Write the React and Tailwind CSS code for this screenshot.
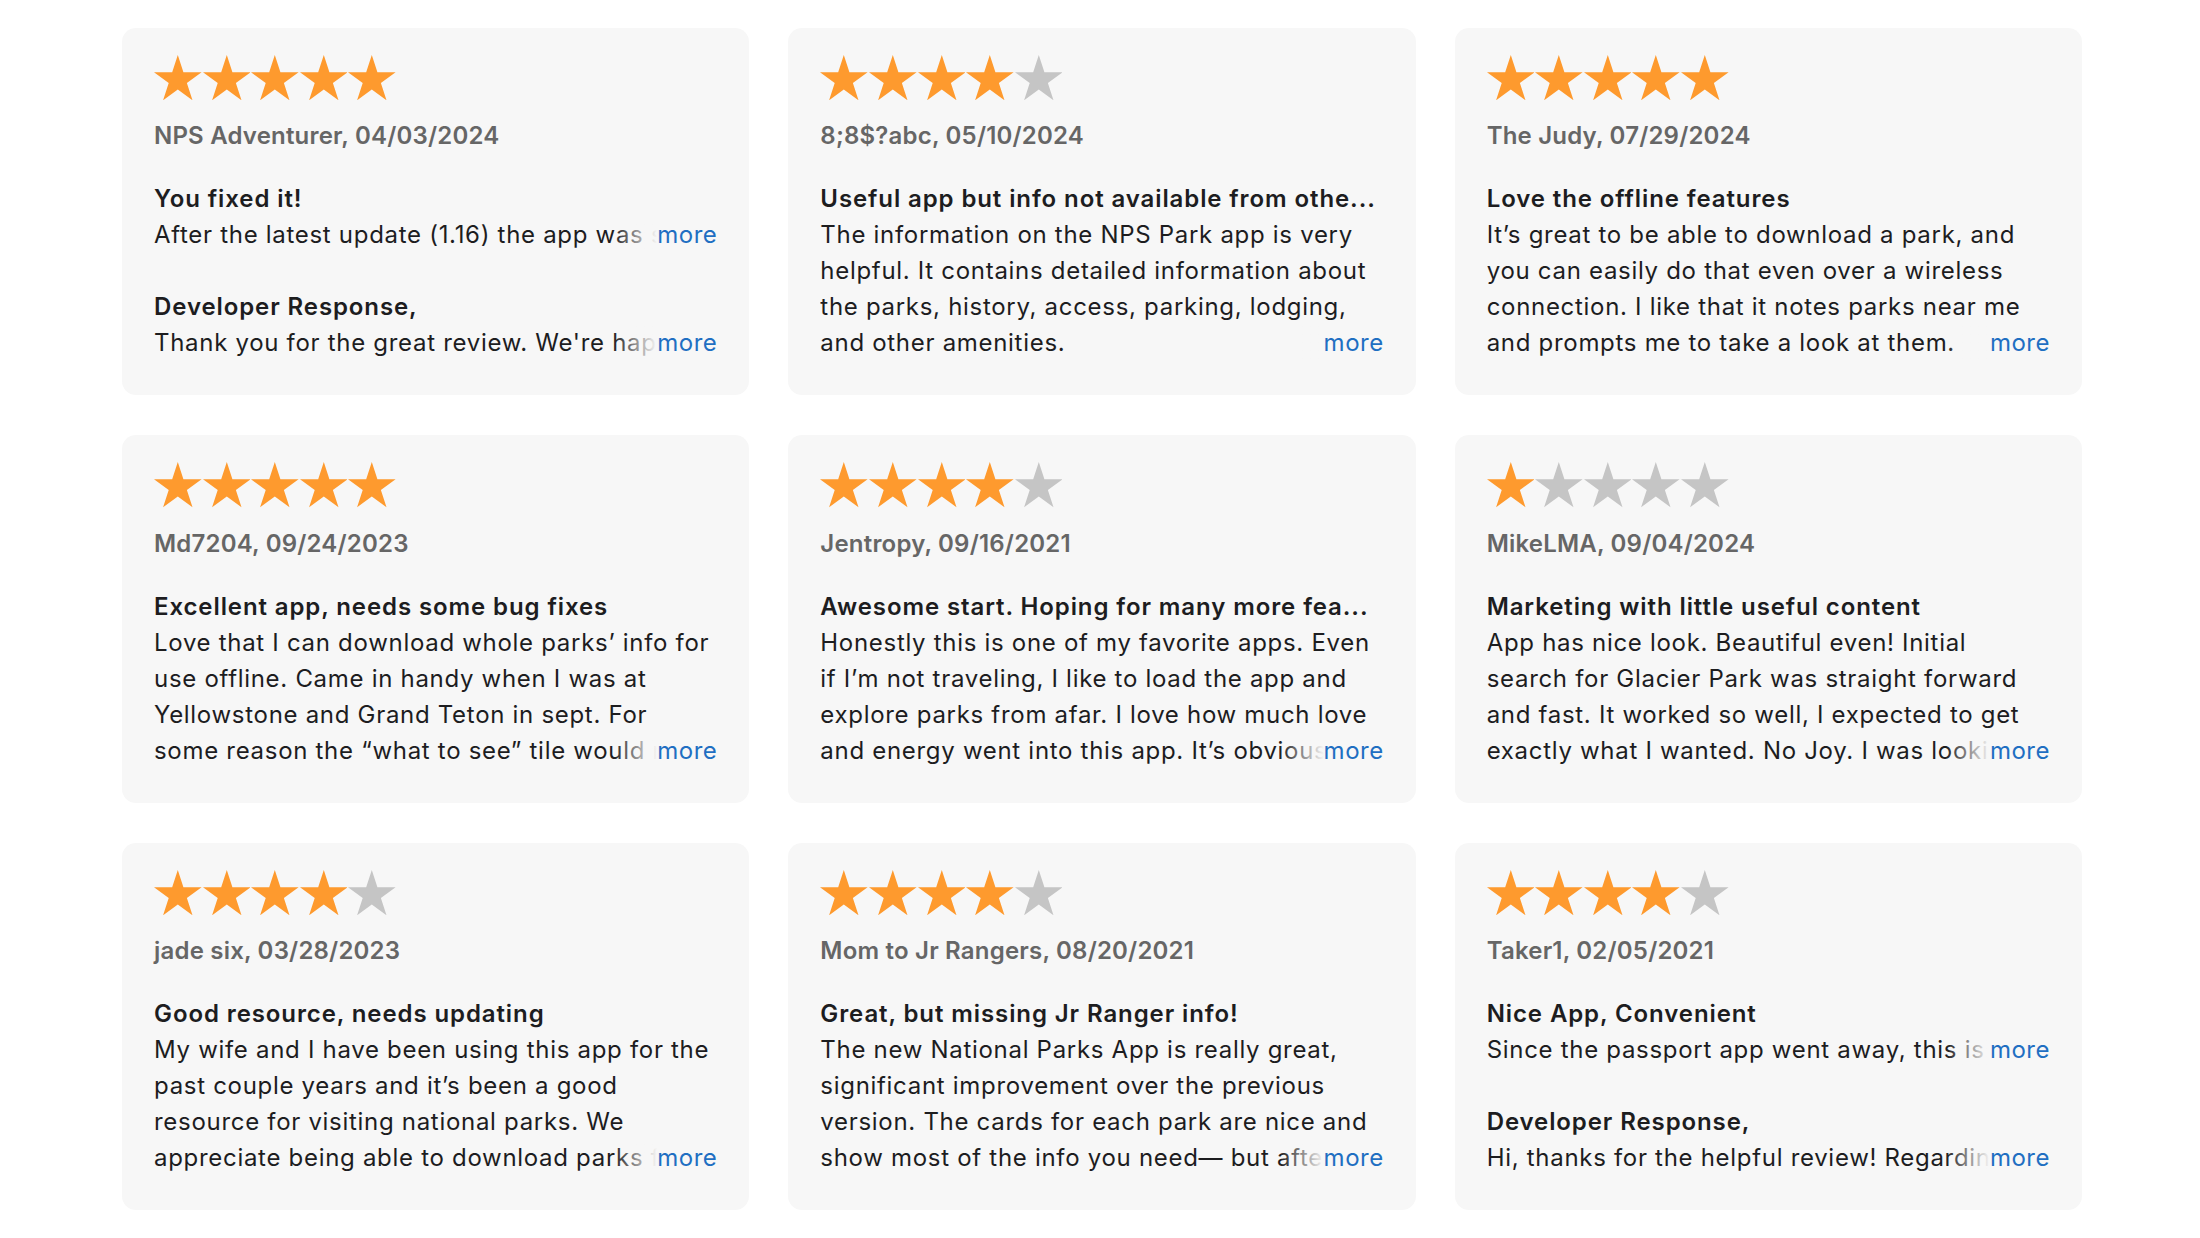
import React from "react";

const reviews = [
  {
    rating: 5,
    author: "NPS Adventurer, 04/03/2024",
    title: "You fixed it!",
    lines: ["After the latest update (1.16) the app was so much better to use"],
    dev: "Thank you for the great review. We're happy to hear that",
  },
  {
    rating: 4,
    author: "8;8$?abc, 05/10/2024",
    title: "Useful app but info not available from othe...",
    lines: [
      "The information on the NPS Park app is very",
      "helpful. It contains detailed information about",
      "the parks, history, access, parking, lodging,",
      "and other amenities.",
    ],
  },
  {
    rating: 5,
    author: "The Judy, 07/29/2024",
    title: "Love the offline features",
    lines: [
      "It’s great to be able to download a park, and",
      "you can easily do that even over a wireless",
      "connection. I like that it notes parks near me",
      "and prompts me to take a look at them.",
    ],
  },
  {
    rating: 5,
    author: "Md7204, 09/24/2023",
    title: "Excellent app, needs some bug fixes",
    lines: [
      "Love that I can download whole parks’ info for",
      "use offline. Came in handy when I was at",
      "Yellowstone and Grand Teton in sept. For",
      "some reason the “what to see” tile would not load",
    ],
  },
  {
    rating: 4,
    author: "Jentropy, 09/16/2021",
    title: "Awesome start. Hoping for many more fea...",
    lines: [
      "Honestly this is one of my favorite apps. Even",
      "if I’m not traveling, I like to load the app and",
      "explore parks from afar. I love how much love",
      "and energy went into this app. It’s obvious that",
    ],
  },
  {
    rating: 1,
    author: "MikeLMA, 09/04/2024",
    title: "Marketing with little useful content",
    lines: [
      "App has nice look. Beautiful even! Initial",
      "search for Glacier Park was straight forward",
      "and fast. It worked so well, I expected to get",
      "exactly what I wanted. No Joy. I was looking for",
    ],
  },
  {
    rating: 4,
    author: "jade six, 03/28/2023",
    title: "Good resource, needs updating",
    lines: [
      "My wife and I have been using this app for the",
      "past couple years and it’s been a good",
      "resource for visiting national parks. We",
      "appreciate being able to download parks for",
    ],
  },
  {
    rating: 4,
    author: "Mom to Jr Rangers, 08/20/2021",
    title: "Great, but missing Jr Ranger info!",
    lines: [
      "The new National Parks App is really great,",
      "significant improvement over the previous",
      "version. The cards for each park are nice and",
      "show most of the info you need— but after",
    ],
  },
  {
    rating: 4,
    author: "Taker1, 02/05/2021",
    title: "Nice App, Convenient",
    lines: ["Since the passport app went away, this is the next best thing"],
    dev: "Hi, thanks for the helpful review! Regarding the passport",
  },
];

function Star({ filled }) {
  return (
    <svg
      viewBox="0 0 47.6 45.3"
      className="w-[47.6px] h-[45.3px] shrink-0"
      fill={filled ? "#fe9a2e" : "#c5c5c5"}
    >
      <polygon points="23.8,0 29.42,17.3 47.6,17.3 32.89,27.99 38.51,45.3 23.8,34.6 9.09,45.3 14.71,27.99 0,17.3 18.18,17.3" />
    </svg>
  );
}

function Stars({ rating }) {
  return (
    <div className="flex gap-[1px]">
      {[0, 1, 2, 3, 4].map((i) => (
        <Star key={i} filled={i < rating} />
      ))}
    </div>
  );
}

function Lines({ lines }) {
  return (
    <div className="tracking-[0.7px] text-[#1d1d1f]">
      {lines.map((l, i) => {
        const last = i === lines.length - 1;
        return (
          <div
            key={i}
            className={
              last
                ? "relative whitespace-nowrap overflow-hidden h-[36px]"
                : "whitespace-nowrap overflow-hidden h-[36px]"
            }
          >
            {l}
            {last && (
              <div className="absolute right-0 top-0 flex h-full">
                <div className="w-[44px] h-full bg-gradient-to-r from-[#f7f7f700] to-[#f7f7f7]" />
                <span className="bg-[#f7f7f7] text-[#1f6fc2] tracking-[0.5px]">more</span>
              </div>
            )}
          </div>
        );
      })}
    </div>
  );
}

function Card({ r }) {
  return (
    <div className="bg-[#f7f7f7] rounded-[14px] px-8 pt-[27px] pb-[34px] min-w-0">
      <Stars rating={r.rating} />
      <div className="mt-[21px] leading-[30px] text-[24px] font-semibold text-[#666666] tracking-[0.2px]">
        {r.author}
      </div>
      <div className="mt-[30px] text-[24px] leading-[36px] text-[#1d1d1f]">
        <div className="font-semibold truncate tracking-[0.9px]">{r.title}</div>
        <Lines lines={r.lines} />
        {r.dev && (
          <div className="mt-[36px]">
            <div className="font-semibold tracking-[0.9px]">Developer Response,</div>
            <Lines lines={[r.dev]} />
          </div>
        )}
      </div>
    </div>
  );
}

export default function App() {
  return (
    <div
      className="min-h-[1238px] bg-white pl-[122px] pr-[118px] pt-[28px]"
      style={{ fontFamily: "Inter, 'Liberation Sans', sans-serif" }}
    >
      <div className="grid grid-cols-3 gap-x-[39px] gap-y-[40px]">
        {reviews.map((r, i) => (
          <Card key={i} r={r} />
        ))}
      </div>
    </div>
  );
}
